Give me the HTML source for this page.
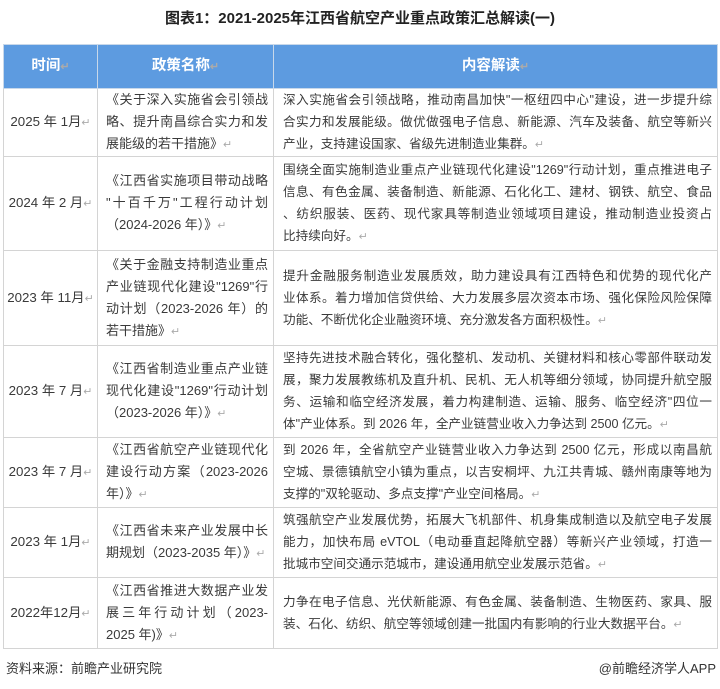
<!DOCTYPE html>
<html><head><meta charset="utf-8">
<style>
*{margin:0;padding:0;box-sizing:border-box}
body{width:720px;height:689px;background:#fff;font-family:"Liberation Sans","Noto Sans CJK SC",sans-serif;color:#3a3a3a;position:relative;overflow:hidden}
.title{position:absolute;top:7px;left:0;width:720px;text-align:center;font-weight:bold;font-size:15px;color:#222}
table{position:absolute;left:3px;top:44px;width:715px;border-collapse:collapse;table-layout:fixed}
td,th{border:1px solid #d4d4d4;font-size:13.3px;line-height:22px;vertical-align:middle;overflow:hidden}
th{background:#5d9be0;color:#fff;font-weight:bold;font-size:14.5px;height:44px;border-color:#c8d8ea}
td.t{text-align:center;white-space:nowrap}
td.n{padding:0 5px 0 8px;font-size:13px}
td.c{padding:0 5px 0 9px;font-size:12.6px}
.l{display:block;text-align:justify;text-align-last:justify;white-space:nowrap}
.e{display:block;white-space:nowrap}
.r{color:#aaa;font-size:11px}
.src{position:absolute;top:658px;left:6px;font-size:13px;color:#333}
.app{position:absolute;top:658px;right:4px;font-size:13px;color:#333}
</style></head><body>
<div class="title">图表1：2021-2025年江西省航空产业重点政策汇总解读(一)</div>
<table>
<colgroup><col style="width:94px"><col style="width:176px"><col></colgroup>
<tr><th>时间<span class="r">↵</span></th><th>政策名称<span class="r">↵</span></th><th>内容解读<span class="r">↵</span></th></tr>
<tr style="height:68px"><td class="t">2025 年 1月<span class="r">↵</span></td>
<td class="n"><span class="l">《关于深入实施省会引领战</span><span class="l">略、提升南昌综合实力和发</span><span class="e">展能级的若干措施》<span class="r">↵</span></span></td>
<td class="c"><span class="l">深入实施省会引领战略，推动南昌加快"一枢纽四中心"建设，进一步提升综</span><span class="l">合实力和发展能级。做优做强电子信息、新能源、汽车及装备、航空等新兴</span><span class="e">产业，支持建设国家、省级先进制造业集群。<span class="r">↵</span></span></td></tr>
<tr style="height:94px"><td class="t">2024 年 2 月<span class="r">↵</span></td>
<td class="n"><span class="l">《江西省实施项目带动战略</span><span class="l">"十百千万"工程行动计划</span><span class="e">（2024-2026 年）》<span class="r">↵</span></span></td>
<td class="c"><span class="l">围绕全面实施制造业重点产业链现代化建设"1269"行动计划，重点推进电子</span><span class="l">信息、有色金属、装备制造、新能源、石化化工、建材、钢铁、航空、食品</span><span class="l">、纺织服装、医药、现代家具等制造业领域项目建设，推动制造业投资占</span><span class="e">比持续向好。<span class="r">↵</span></span></td></tr>
<tr style="height:95px"><td class="t">2023 年 11月<span class="r">↵</span></td>
<td class="n"><span class="l">《关于金融支持制造业重点</span><span class="l">产业链现代化建设"1269"行</span><span class="l">动计划（2023-2026 年）的</span><span class="e">若干措施》<span class="r">↵</span></span></td>
<td class="c"><span class="l">提升金融服务制造业发展质效，助力建设具有江西特色和优势的现代化产</span><span class="l">业体系。着力增加信贷供给、大力发展多层次资本市场、强化保险风险保障</span><span class="e">功能、不断优化企业融资环境、充分激发各方面积极性。<span class="r">↵</span></span></td></tr>
<tr style="height:92px"><td class="t">2023 年 7 月<span class="r">↵</span></td>
<td class="n"><span class="l">《江西省制造业重点产业链</span><span class="l">现代化建设"1269"行动计划</span><span class="e">（2023-2026 年）》<span class="r">↵</span></span></td>
<td class="c"><span class="l">坚持先进技术融合转化，强化整机、发动机、关键材料和核心零部件联动发</span><span class="l">展，聚力发展教练机及直升机、民机、无人机等细分领域，协同提升航空服</span><span class="l">务、运输和临空经济发展，着力构建制造、运输、服务、临空经济"四位一</span><span class="e">体"产业体系。到 2026 年，全产业链营业收入力争达到 2500 亿元。<span class="r">↵</span></span></td></tr>
<tr style="height:70px"><td class="t">2023 年 7 月<span class="r">↵</span></td>
<td class="n"><span class="l">《江西省航空产业链现代化</span><span class="l">建设行动方案（2023-2026</span><span class="e">年）》<span class="r">↵</span></span></td>
<td class="c"><span class="l">到 2026 年，全省航空产业链营业收入力争达到 2500 亿元，形成以南昌航</span><span class="l">空城、景德镇航空小镇为重点，以吉安桐坪、九江共青城、赣州南康等地为</span><span class="e">支撑的"双轮驱动、多点支撑"产业空间格局。<span class="r">↵</span></span></td></tr>
<tr style="height:70px"><td class="t">2023 年 1月<span class="r">↵</span></td>
<td class="n"><span class="l">《江西省未来产业发展中长</span><span class="e">期规划（2023-2035 年）》<span class="r">↵</span></span></td>
<td class="c"><span class="l">筑强航空产业发展优势，拓展大飞机部件、机身集成制造以及航空电子发展</span><span class="l">能力，加快布局 eVTOL（电动垂直起降航空器）等新兴产业领域，打造一</span><span class="e">批城市空间交通示范城市，建设通用航空业发展示范省。<span class="r">↵</span></span></td></tr>
<tr style="height:71px"><td class="t">2022年12月<span class="r">↵</span></td>
<td class="n"><span class="l">《江西省推进大数据产业发</span><span class="l">展三年行动计划（2023-</span><span class="e">2025 年)》<span class="r">↵</span></span></td>
<td class="c"><span class="l">力争在电子信息、光伏新能源、有色金属、装备制造、生物医药、家具、服</span><span class="e">装、石化、纺织、航空等领域创建一批国内有影响的行业大数据平台。<span class="r">↵</span></span></td></tr>
</table>
<div class="src">资料来源：前瞻产业研究院</div>
<div class="app">@前瞻经济学人APP</div>
</body></html>
